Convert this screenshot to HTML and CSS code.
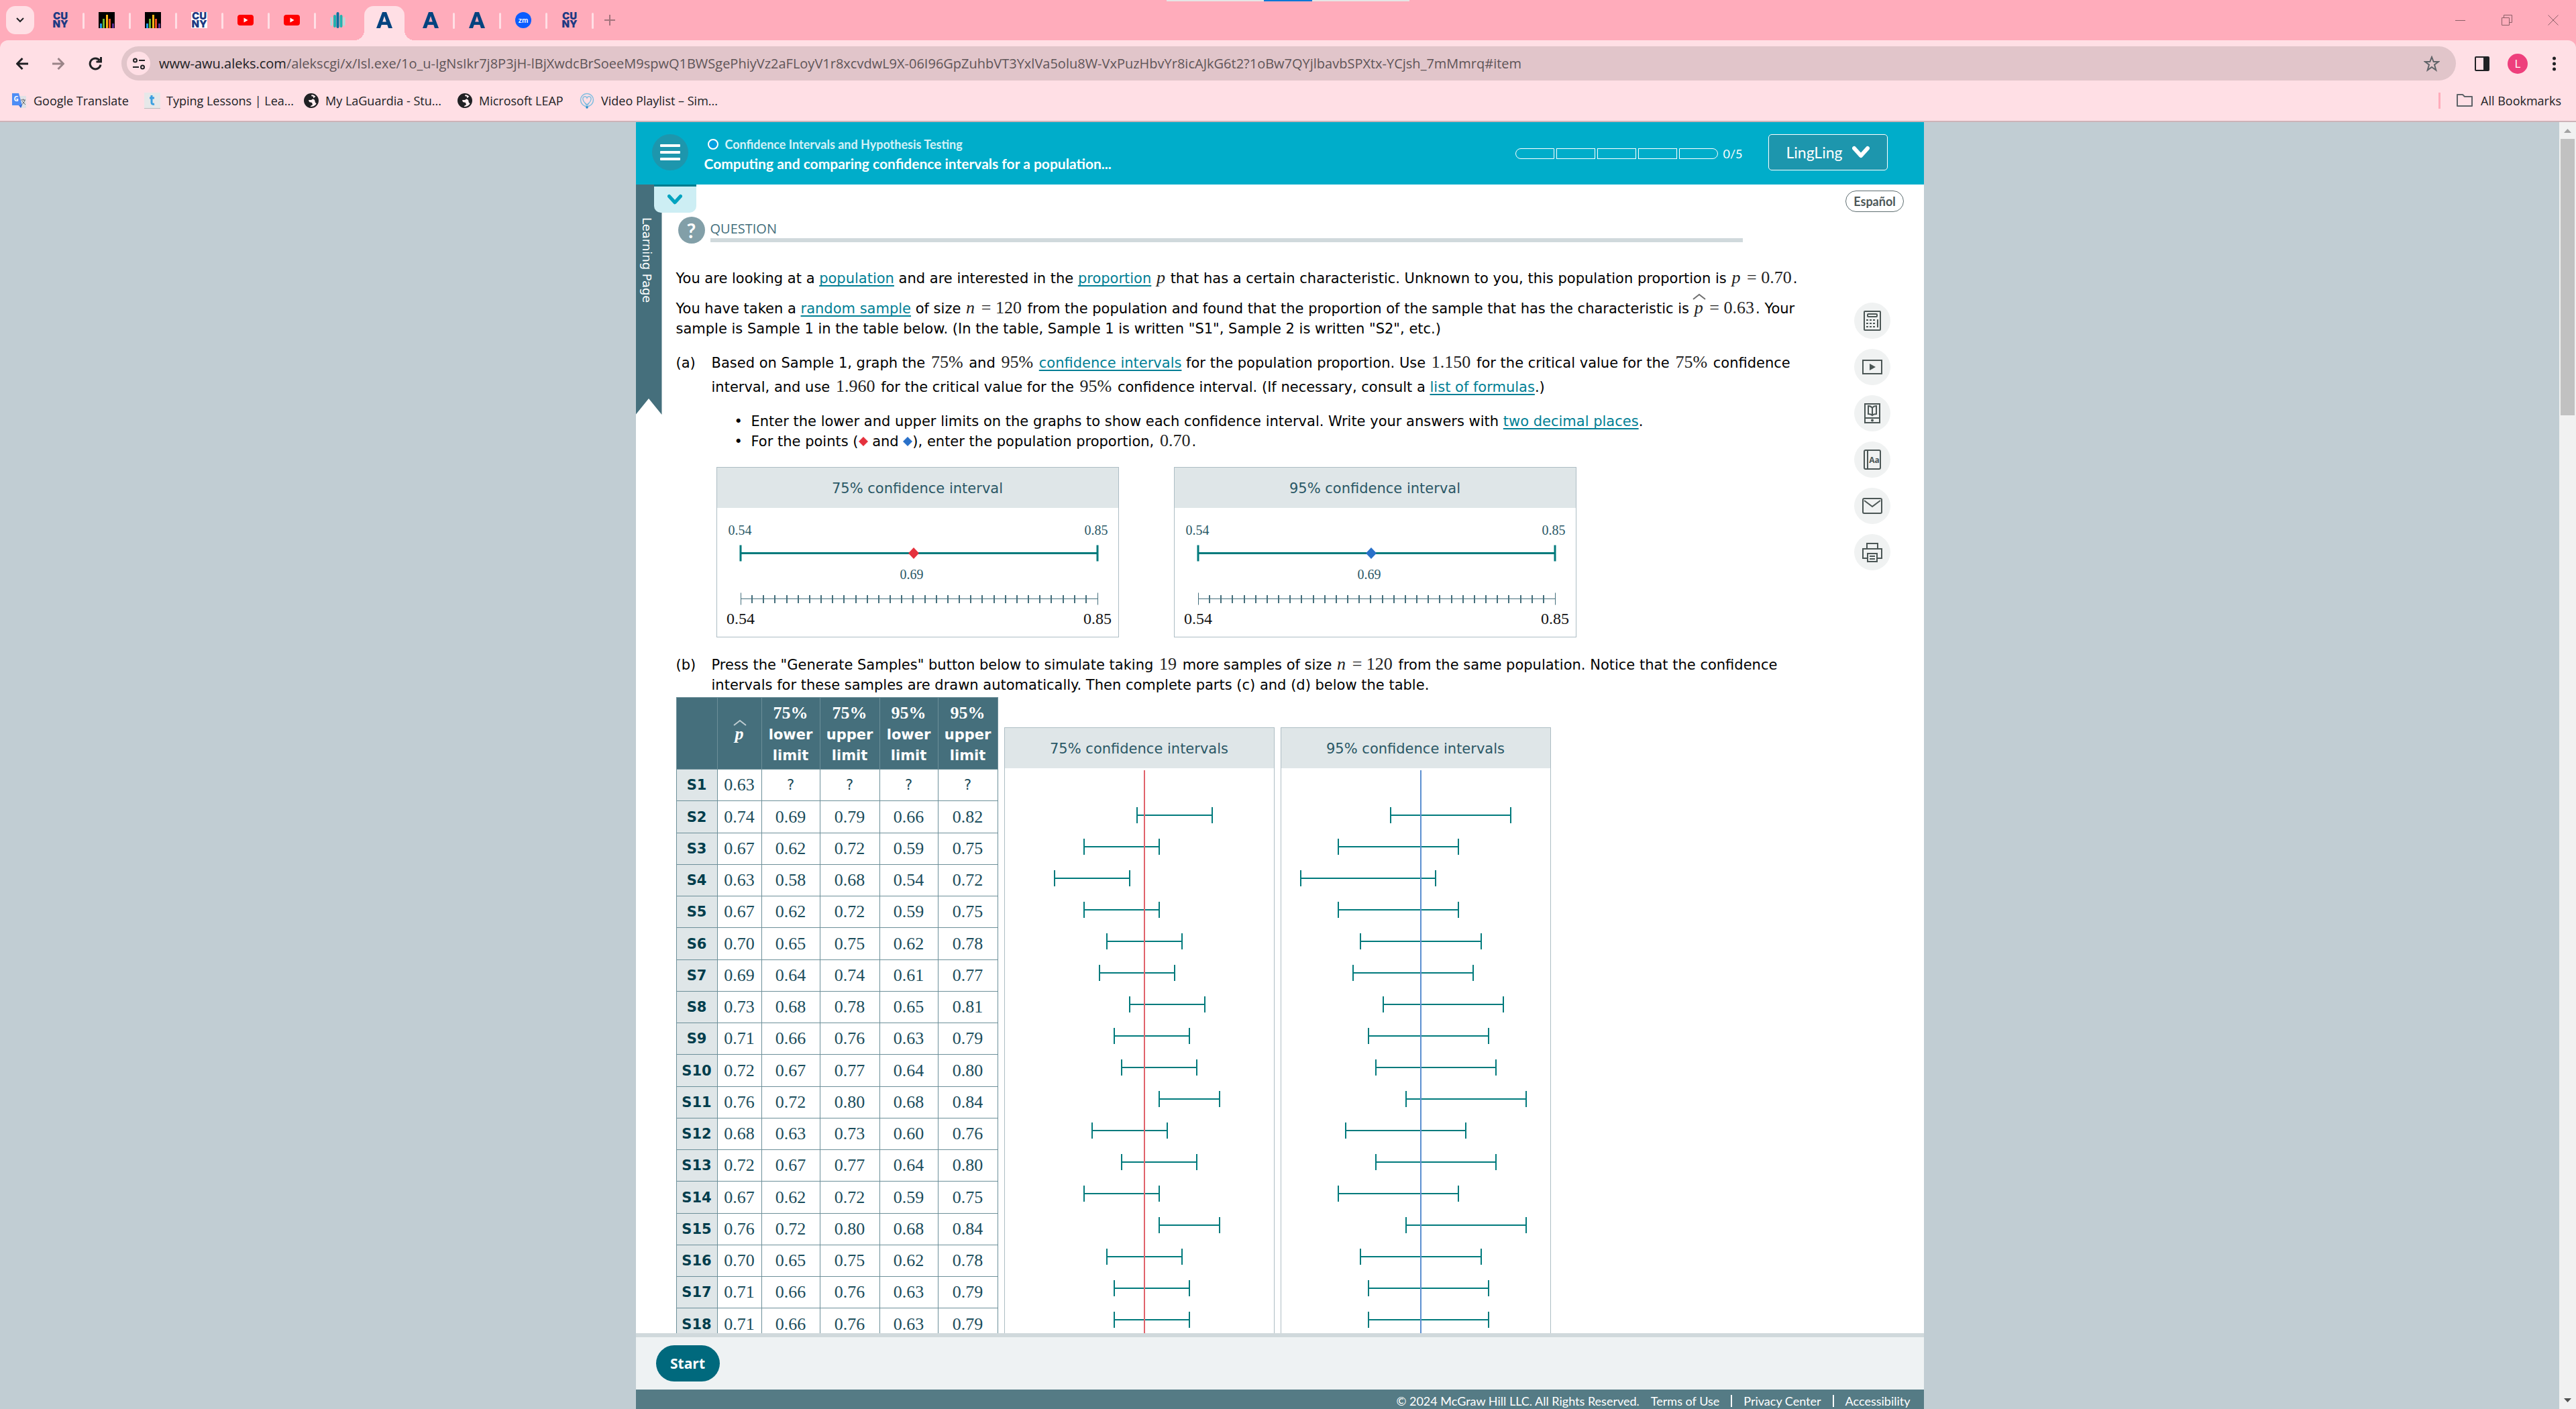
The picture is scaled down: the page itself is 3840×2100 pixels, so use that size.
FILE: index.html
```html
<!DOCTYPE html>
<html lang="en">
<head>
<meta charset="utf-8">
<title>Computing and comparing confidence intervals for a population proportion</title>
<link rel="stylesheet" href="styles.css">
</head>
<body>
<svg class="defs" aria-hidden="true">
  <symbol id="cuny" viewBox="0 0 24 24"><text x="12" y="11" text-anchor="middle" class="cuny-text">CU</text><text x="12" y="23" text-anchor="middle" class="cuny-text">NY</text></symbol>
  <symbol id="bars" viewBox="0 0 24 24"><path fill="#000" d="M0 0h24v24H0z"/><path fill="#1e9be9" d="M2 17h3v7H2z"/><path fill="#6cb52d" d="M6 10h3v14H6z"/><path fill="#fbb615" d="M11 4h3v20h-3z"/><path fill="#f04e23" d="M15 10h3v14h-3z"/><path fill="#5c2d91" d="M20 17h3v7h-3z"/></symbol>
  <symbol id="yt" viewBox="0 0 24 24"><rect y="4" width="24" height="16" rx="4" fill="#f00"/><path fill="#fff" d="M9.500 8.500v7l6-3.500z"/></symbol>
  <symbol id="teal" viewBox="0 0 24 24" stroke-linecap="round"><path stroke="#a9dfdf" stroke-width="3" d="M2 9v10M21 9v10"/><path stroke="#22b3b0" stroke-width="4" d="M7 6v15M16.500 6v15"/><path stroke="#0b6f9f" stroke-width="4" d="M11.500 2v20"/></symbol>
  <symbol id="aleks" viewBox="0 0 24 24"><path fill="#03437f" fill-rule="evenodd" d="M9 0h6l9 24h-6l-1.700-5H7.700L6 24H0zM12 6L9.200 14.500h5.600z"/></symbol>
  <symbol id="globe" viewBox="0 0 24 24"><circle cx="12" cy="12" r="10" fill="#fff0f2" stroke="#202124" stroke-width="2"/><path fill="#202124" d="M2 11C2 5 7 1 13 2l-1 3 3 1v3l-3 2-4 0 1 3 4 1 1 3-3 2-1 3C5 20 2 16 2 11zM19 5c3 3 4 8 2 12l-3-2-1-4-3-2 3-2z"/></symbol>
  <symbol id="hat" viewBox="0 0 20 10"><path d="M1 9l9-7 9 7" fill="none" stroke="currentColor" stroke-width="2"/></symbol>
  <symbol id="chev" viewBox="0 0 26 20"><path d="M3 4l10 11L23 4" fill="none" stroke="currentColor" stroke-width="6" stroke-linecap="round" stroke-linejoin="round"/></symbol>
</svg>

<header class="browser">
  <div class="screen-pill"><span></span></div>
  <div class="tabstrip">
    <button class="tab-search" aria-label="Search tabs"><svg width="14" height="10" viewBox="0 0 14 10"><path d="M2 2l5 5 5-5" fill="none" stroke="#202124" stroke-width="2"/></svg></button>
    <nav class="tabs">
      <span class="tab"><svg><use href="#cuny"/></svg></span>
      <span class="tab"><svg><use href="#bars"/></svg></span>
      <span class="tab"><svg><use href="#bars"/></svg></span>
      <span class="tab"><svg class="white"><use href="#cuny"/></svg></span>
      <span class="tab"><svg><use href="#yt"/></svg></span>
      <span class="tab"><svg><use href="#yt"/></svg></span>
      <span class="tab bare"><svg><use href="#teal"/></svg></span>
      <span class="tab active"><svg><use href="#aleks"/></svg></span>
      <span class="tab"><svg><use href="#aleks"/></svg></span>
      <span class="tab"><svg><use href="#aleks"/></svg></span>
      <span class="tab"><svg viewBox="0 0 24 24"><circle cx="12" cy="12" r="12" fill="#0b5cff"/><text x="12" y="16" text-anchor="middle" class="zm-text">zm</text></svg></span>
      <span class="tab"><svg><use href="#cuny"/></svg></span>
    </nav>
    <button class="new-tab" aria-label="New tab"><svg width="16" height="16" viewBox="0 0 16 16"><path d="M8 0v16M0 8h16" stroke="#a3737c" stroke-width="2"/></svg></button>
    <div class="win-controls">
      <button aria-label="Minimise"><svg width="16" height="16" viewBox="0 0 16 16"><path d="M0 8.500h15"/></svg></button>
      <button aria-label="Restore"><svg width="16" height="16" viewBox="0 0 16 16"><path d="M.5 4.500h11v11H.5zM3.500 4V.5h12v11H12"/></svg></button>
      <button aria-label="Close"><svg width="16" height="16" viewBox="0 0 16 16"><path d="M.5.5l15 15M15.500.5l-15 15"/></svg></button>
    </div>
  </div>
  <div class="chrome-body">
    <div class="toolbar">
      <button aria-label="Back"><svg width="18" height="18" viewBox="0 0 18 18"><path d="M18 9H2M9.500 1L1.500 9l8 8" stroke="#202124"/></svg></button>
      <button aria-label="Forward"><svg width="18" height="18" viewBox="0 0 18 18"><path d="M0 9h16M8.500 1l8 8-8 8" stroke="#9a8488"/></svg></button>
      <button aria-label="Reload"><svg width="20" height="20" viewBox="0 0 20 20"><path d="M18 11.500A8 8 0 1 1 16.500 5M18.500 0v7h-7" stroke="#202124"/></svg></button>
      <div class="omnibox">
        <span class="site-info"><svg width="20" height="18" viewBox="0 0 20 18" fill="none" stroke="#202124" stroke-width="2"><circle cx="4.500" cy="4" r="2.500"/><path d="M10 4h9M1 14h9"/><circle cx="15.500" cy="14" r="2.500"/></svg></span>
        <p class="url"><b>www-awu.aleks.com</b>/alekscgi/x/Isl.exe/1o_u-IgNsIkr7j8P3jH-lBjXwdcBrSoeeM9spwQ1BWSgePhiyVz2aFLoyV1r8xcvdwL9X-06I96GpZuhbVT3YxlVa5olu8W-VxPuzHbvYr8icAJkG6t2?1oBw7QYjlbavbSPXtx-YCjsh_7mMmrq#item</p>
        <svg class="star" width="24" height="24" viewBox="0 0 24 24"><path d="M12 2l2.700 7H22l-6 4.500 2.300 8L12 17l-6.300 4.500 2.300-8L2 9h7.300z" fill="none" stroke="#5f6368" stroke-width="2"/></svg>
      </div>
      <button aria-label="Side panel"><svg width="22" height="22" viewBox="0 0 22 22"><rect x="1" y="1" width="20" height="20" rx="1" fill="none" stroke="#202124"/><path d="M13 1h8v20h-8z" fill="#202124"/></svg></button>
      <span class="avatar">L</span>
      <button class="kebab" aria-label="Menu"><svg width="5" height="22" viewBox="0 0 5 22" fill="#202124"><circle cx="2.500" cy="3" r="2.500"/><circle cx="2.500" cy="11" r="2.500"/><circle cx="2.500" cy="19" r="2.500"/></svg></button>
    </div>
    <div class="bookmarks">
      <span class="bm bm-1"><svg viewBox="0 0 24 24"><path fill="#dfe1e5" d="M10 5h12v18H14z"/><path fill="#3367d6" d="M11 19h5l-2 4z"/><path fill="#4e8df5" d="M1 1h10l5 18H1z"/><text x="7" y="13" text-anchor="middle" class="g-text">G</text><path d="M14 11h7M17.500 9.500V11M20 11c-1 4-3 6-5 7M16 13l5 5" stroke="#5f6368" fill="none"/></svg>Google Translate</span>
      <span class="bm bm-2"><svg viewBox="0 0 24 24"><path fill="#b9bcbd" d="M0 0h24v24H0z"/><path fill="#e6e8e9" d="M0 0h24v23H0z"/><path d="M11 4v11q0 3 4 2M8 8h7" stroke="#3a9fe0" stroke-width="3" fill="none"/></svg>Typing Lessons | Lea...</span>
      <span class="bm bm-3"><svg><use href="#globe"/></svg>My LaGuardia - Stu...</span>
      <span class="bm bm-4"><svg><use href="#globe"/></svg>Microsoft LEAP</span>
      <span class="bm bm-5"><svg viewBox="0 0 24 24" fill="none" stroke="#7fbde0" stroke-width="1.500"><circle cx="12" cy="11" r="9.500"/><path d="M12 18c-4-3-7-6-6-10 1-3 5-3 6 0 1-3 5-3 6 0 1 4-2 7-6 10zM9 16l3 3 3-3"/><circle cx="12" cy="22" r="1" stroke="#1b87c9"/></svg>Video Playlist – Sim...</span>
      <span class="bm-all"><svg viewBox="0 0 24 24"><path d="M1 3h8l3 3h11v14H1z" fill="none" stroke="#5f6368" stroke-width="2" stroke-linejoin="round"/></svg>All Bookmarks</span>
    </div>
  </div>
</header>

<div class="viewport">
  <div class="backdrop">
    <div class="app">
      <header class="app-head">
        <button class="burger" aria-label="Menu"><span></span><span></span><span></span></button>
        <div class="titles">
          <p class="topic"><i></i>Confidence Intervals and Hypothesis Testing</p>
          <h1>Computing and comparing confidence intervals for a population...</h1>
        </div>
        <div class="progress"><i></i><i></i><i></i><i></i><i></i></div>
        <span class="score">0/5</span>
        <button class="user">LingLing<svg width="26" height="20"><use href="#chev"/></svg></button>
      </header>

      <div class="work">
        <div class="rail">
          <button class="drop" aria-label="Show more"><svg width="22" height="17"><use href="#chev"/></svg></button>
          <a class="ribbon" href="#learning">Learning Page</a>
        </div>
        <main>
          <div class="question"><span class="qmark">?</span><h2>QUESTION</h2></div>
          <p>You are looking at a <a href="#population">population</a> and are interested in the <a href="#proportion">proportion</a> <var>p</var> that has a certain characteristic. Unknown to you, this population proportion is <var>p</var> <span class="m">= 0.70</span>.</p>
          <p>You have taken a <a href="#sample">random sample</a> of size <var>n</var> <span class="m">= 120</span> from the population and found that the proportion of the sample that has the characteristic is <var class="phat"><svg><use href="#hat"/></svg>p</var> <span class="m">= 0.63</span>. Your<br>sample is Sample 1 in the table below. (In the table, Sample 1 is written "S1", Sample 2 is written "S2", etc.)</p>
          <div class="part part-a"><span>(a)</span><p>Based on Sample 1, graph the <span class="m">75%</span> and <span class="m">95%</span> <a href="#ci">confidence intervals</a> for the population proportion. Use <span class="m">1.150</span> for the critical value for the <span class="m">75%</span> confidence<br>interval, and use <span class="m">1.960</span> for the critical value for the <span class="m">95%</span> confidence interval. (If necessary, consult a <a href="#formulas">list of formulas</a>.)</p></div>
          <ul>
            <li>Enter the lower and upper limits on the graphs to show each confidence interval. Write your answers with <a href="#places">two decimal places</a>.</li>
            <li>For the points (<svg class="dia red" viewBox="0 0 14 14"><path d="M7 0l7 7-7 7-7-7z"/></svg> and <svg class="dia blue" viewBox="0 0 14 14"><path d="M7 0l7 7-7 7-7-7z"/></svg>), enter the population proportion, <span class="m">0.70</span>.</li>
          </ul>
          <div class="cards">
            <section class="panel card">
              <h3>75% confidence interval</h3>
              <svg class="single red" viewBox="0 0 598 192"></svg>
            </section>
            <section class="panel card">
              <h3>95% confidence interval</h3>
              <svg class="single blue" viewBox="0 0 598 192"></svg>
            </section>
          </div>
          <div class="part part-b"><span>(b)</span><p>Press the "Generate Samples" button below to simulate taking <span class="m">19</span> more samples of size <var>n</var> <span class="m">= 120</span> from the same population. Notice that the confidence<br>intervals for these samples are drawn automatically. Then complete parts (c) and (d) below the table.</p></div>
          <div class="results">
            <table>
              <colgroup><col class="c1"><col class="c2"><col class="c3"><col class="c4"><col class="c3"><col class="c4"></colgroup>
              <thead><tr><th></th><th><var class="phat"><svg><use href="#hat"/></svg>p</var></th><th><span class="m">75%</span><br>lower<br>limit</th><th><span class="m">75%</span><br>upper<br>limit</th><th><span class="m">95%</span><br>lower<br>limit</th><th><span class="m">95%</span><br>upper<br>limit</th></tr></thead>
              <tbody>
                <tr><th>S1</th><td>0.63</td><td class="q">?</td><td class="q">?</td><td class="q">?</td><td class="q">?</td></tr>
                <tr><th>S2</th><td>0.74</td><td>0.69</td><td>0.79</td><td>0.66</td><td>0.82</td></tr>
                <tr><th>S3</th><td>0.67</td><td>0.62</td><td>0.72</td><td>0.59</td><td>0.75</td></tr>
                <tr><th>S4</th><td>0.63</td><td>0.58</td><td>0.68</td><td>0.54</td><td>0.72</td></tr>
                <tr><th>S5</th><td>0.67</td><td>0.62</td><td>0.72</td><td>0.59</td><td>0.75</td></tr>
                <tr><th>S6</th><td>0.70</td><td>0.65</td><td>0.75</td><td>0.62</td><td>0.78</td></tr>
                <tr><th>S7</th><td>0.69</td><td>0.64</td><td>0.74</td><td>0.61</td><td>0.77</td></tr>
                <tr><th>S8</th><td>0.73</td><td>0.68</td><td>0.78</td><td>0.65</td><td>0.81</td></tr>
                <tr><th>S9</th><td>0.71</td><td>0.66</td><td>0.76</td><td>0.63</td><td>0.79</td></tr>
                <tr><th>S10</th><td>0.72</td><td>0.67</td><td>0.77</td><td>0.64</td><td>0.80</td></tr>
                <tr><th>S11</th><td>0.76</td><td>0.72</td><td>0.80</td><td>0.68</td><td>0.84</td></tr>
                <tr><th>S12</th><td>0.68</td><td>0.63</td><td>0.73</td><td>0.60</td><td>0.76</td></tr>
                <tr><th>S13</th><td>0.72</td><td>0.67</td><td>0.77</td><td>0.64</td><td>0.80</td></tr>
                <tr><th>S14</th><td>0.67</td><td>0.62</td><td>0.72</td><td>0.59</td><td>0.75</td></tr>
                <tr><th>S15</th><td>0.76</td><td>0.72</td><td>0.80</td><td>0.68</td><td>0.84</td></tr>
                <tr><th>S16</th><td>0.70</td><td>0.65</td><td>0.75</td><td>0.62</td><td>0.78</td></tr>
                <tr><th>S17</th><td>0.71</td><td>0.66</td><td>0.76</td><td>0.63</td><td>0.79</td></tr>
                <tr><th>S18</th><td>0.71</td><td>0.66</td><td>0.76</td><td>0.63</td><td>0.79</td></tr>
              </tbody>
            </table>
            <section class="panel"><h3>75% confidence intervals</h3><svg class="many red" data-col="2" viewBox="0 0 401 850"></svg></section>
            <section class="panel"><h3>95% confidence intervals</h3><svg class="many blue" data-col="4" viewBox="0 0 401 850"></svg></section>
          </div>
        </main>
        <aside>
          <button class="lang">Español</button>
          <nav class="tools">
            <button aria-label="Calculator"><svg viewBox="0 0 30 30"><rect x="3" y="1" width="24" height="28" rx="1"/><rect x="8" y="5" width="14" height="4" rx="1"/><path stroke-dasharray="3 2" d="M6 14h14M6 19h14M6 24h14"/><path d="M23 13v12"/></svg></button>
            <button aria-label="Video"><svg viewBox="0 0 30 30"><path d="M1 5h28v20H1z"/><path class="solid" d="M11 10l9 5-9 5z"/></svg></button>
            <button aria-label="eBook"><svg viewBox="0 0 30 30"><path d="M4 1h22v28H4zM4 22h22M9 4q4 0 6 3 2-3 6-3v12q-4 0-6 2-2-2-6-2zM15 7v11"/><circle cx="15" cy="25.500" r="1"/></svg></button>
            <button aria-label="Dictionary"><svg viewBox="0 0 30 30"><rect x="3" y="1" width="24" height="28" rx="2"/><path d="M8 1v28"/><text x="18" y="20" text-anchor="middle">Aa</text></svg></button>
            <button aria-label="Message"><svg viewBox="0 0 30 30"><rect x="1" y="4" width="28" height="22" rx="2"/><path d="M3 7l12 9 12-9"/></svg></button>
            <button aria-label="Print"><svg viewBox="0 0 30 30"><path d="M7 10V2h16v8M7 24H1V10h28v14h-6"/><rect x="8" y="17" width="14" height="12"/><path d="M11 21h8M11 25h8"/></svg></button>
          </nav>
        </aside>
      </div>

      <div class="actions"><button class="start">Start</button></div>
      <footer><span>© 2024 McGraw Hill LLC. All Rights Reserved.</span><a href="#terms">Terms of Use</a><i></i><a href="#privacy">Privacy Center</a><i></i><a href="#access">Accessibility</a></footer>
    </div>
  </div>
  <div class="scrollbar"><svg width="11" height="6" viewBox="0 0 11 6"><path fill="#a3a3a3" d="M0 6l5.500-6L11 6z"/></svg><span></span><svg width="11" height="6" viewBox="0 0 11 6"><path fill="#505050" d="M0 0l5.500 6L11 0z"/></svg></div>
</div>
<script src="script.js"></script>
</body>
</html>
```
FILE: styles.css
```css
* { box-sizing: border-box; }
body { margin: 0; height: 100vh; display: flex; flex-direction: column; overflow: hidden; font-family: "DejaVu Sans", sans-serif; font-size: 21px; color: #000; background: #c1cdd3; }
h1, h2, h3, p, ul { margin: 0; padding: 0; font-weight: normal; }
button { font: inherit; color: inherit; border: 0; padding: 0; background: none; display: flex; align-items: center; justify-content: center; }
svg { display: block; flex: none; }
.defs { display: none; }

/* browser window */
.browser { font-family: "Open Sans", sans-serif; background: #ffacbb; position: relative; }
.screen-pill { position: absolute; top: 0; left: 0; right: 0; margin: 0 auto; width: 362px; height: 2px; background: #e5e5e5; display: flex; justify-content: center; }
.screen-pill span { width: 72px; background: #0078d7; }
.tabstrip { height: 60px; display: flex; align-items: center; padding-left: 9px; }
.tab-search { width: 42px; height: 42px; border-radius: 14px; background: #ffdfe5; margin-right: 6px; }
.tabs { display: flex; align-self: stretch; }
.tab { width: 69px; display: flex; align-items: center; justify-content: center; position: relative; padding-right: 3px; }
.tab::after { content: ""; position: absolute; right: 0; top: 19px; width: 3px; height: 24px; border-radius: 2px; background: #ffdfe5; }
.tab svg { width: 24px; height: 24px; position: relative; }
.tab svg.white { background: #fff; }
.tab.bare::after { display: none; }
.tab.active::before { content: ""; position: absolute; left: 3px; right: 6px; top: 9px; bottom: 0; border-radius: 14px 14px 0 0; background: #ffdfe5; }
.tab.active::after { top: auto; bottom: 0; left: -12px; right: -9px; width: auto; height: 15px; border-radius: 0; background: radial-gradient(circle at 0 0, transparent 15px, #ffdfe5 15px) left / 15px 15px no-repeat, radial-gradient(circle at 100% 0, transparent 15px, #ffdfe5 15px) right / 15px 15px no-repeat; }
.cuny-text { font: 900 15px Inter, sans-serif; fill: #1d3a83; }
.zm-text { font: 700 11px Lato, sans-serif; fill: #fff; }
.g-text { font: 700 10px "Open Sans", sans-serif; fill: #fff; }
.new-tab { margin-left: 16px; }
.win-controls { margin-left: auto; display: flex; gap: 53px; padding-right: 26px; }
.win-controls path { fill: none; stroke: #8c5f67; }
.chrome-body { background: #ffdfe5; border-radius: 12px 12px 0 0; border-bottom: 2px solid #cdb3b8; height: 122px; }
.toolbar { display: flex; align-items: center; padding: 9px 30px 0 24px; }
.toolbar button path, .toolbar button rect { stroke-width: 2; }
.toolbar button > svg > path:not([fill]) { fill: none; stroke-width: 3; }
.toolbar > button + button { margin-left: 36px; }
.omnibox { margin: 0 28px 0 29px; flex: 1; min-width: 0; height: 51px; border-radius: 26px; background: #e1c5ca; display: flex; align-items: center; padding: 0 24px 0 8px; }
.site-info { width: 35px; height: 35px; border-radius: 50%; background: #ffdfe5; display: flex; align-items: center; justify-content: center; flex: none; }
.url { margin-left: 13px; font-size: 20px; color: #5f5558; flex: 1; white-space: nowrap; overflow: hidden; }
.url b { font-weight: 400; color: #202124; }
.avatar { width: 30px; height: 30px; border-radius: 50%; background: #ee3f7c; color: #fff; font-size: 17px; line-height: 30px; text-align: center; margin-left: 27px; }
.toolbar .kebab { margin-left: 37px; }
.bookmarks { height: 60px; display: flex; align-items: center; padding: 0 22px 0 17px; font-size: 18px; color: #202124; white-space: nowrap; }
.bookmarks svg { width: 24px; height: 24px; }
.bm, .bm-all { display: flex; align-items: center; gap: 9px; }
.bm-1 { width: 198px; } .bm-2 { width: 237px; } .bm-3 { width: 229px; } .bm-4 { width: 182px; }
.bm-all { margin-left: auto; border-left: 3px solid #ffacbb; height: 24px; padding-left: 24px; gap: 12px; }

/* page */
.viewport { flex: 1; min-height: 0; display: flex; }
.backdrop { flex: 1; min-width: 0; display: flex; justify-content: center; }
.app { width: 100%; max-width: 1920px; display: flex; flex-direction: column; background: #fff; }
.scrollbar { width: 25px; background: #f1f1f1; display: flex; flex-direction: column; align-items: center; padding: 10px 0; }
.scrollbar span { width: 21px; height: 412px; background: #c1c1c1; margin: 9px 0 auto; }

.app-head { height: 93px; flex: none; background: #00adca; color: #fff; display: flex; align-items: center; padding: 0 54px 3px 24px; font-family: Lato, sans-serif; }
.burger { width: 54px; height: 54px; border-radius: 50%; background: #1d96ad; flex-direction: column; gap: 6px; margin-right: 24px; }
.burger span { width: 30px; height: 4px; background: #fff; border-radius: 1px; }
.titles { padding-top: 7px; }
.topic { font-size: 18px; line-height: 26px; font-weight: 700; color: #d6f2f7; display: flex; align-items: center; gap: 10px; padding-left: 5px; }
.topic i { width: 16px; height: 16px; border-radius: 50%; border: 2px solid #fff; background: #009fe0; }
h1 { font-size: 21px; line-height: 32px; font-weight: 700; }
.progress { margin-left: auto; display: flex; gap: 3px; padding-top: 3px; }
.progress i { width: 58px; height: 16px; border: 1px solid #fff; }
.progress i:first-child { border-radius: 8px 0 0 8px; }
.progress i:last-child { border-radius: 0 8px 8px 0; }
.score { font-size: 18px; margin: 0 38px 0 7px; padding-top: 3px; }
.user { width: 178px; height: 54px; border: 1px solid #fff; border-radius: 5px; background: #1d96ad; font-size: 23px; gap: 14px; }

.work { flex: 1; min-height: 0; overflow: hidden; display: flex; align-items: flex-start; }
.rail { width: 39px; flex: none; position: relative; }
.ribbon { display: flex; align-items: center; writing-mode: vertical-rl; width: 39px; height: 343px; padding: 49px 6px 0 0; background: #456f7c; color: #fff; text-decoration: none; font: 18px/1 "DejaVu Sans", sans-serif; clip-path: polygon(0 0, 100% 0, 100% 100%, 50% 319px, 0 100%); }
.drop { position: absolute; z-index: 1; left: 27px; top: 0; width: 63px; height: 42px; border-radius: 0 0 10px 10px; border-top: 3px solid #007c8e; background: #cdeef4; color: #00a3bf; }
main { flex: 1; min-width: 0; padding: 48px 0 0 21px; }
.question { display: flex; gap: 8px; margin: 0 124px 37px 3px; }
.qmark { width: 40px; height: 40px; border-radius: 50%; background: #829fa8; color: #fff; font: 700 30px/40px Lato, sans-serif; text-align: center; }
h2 { flex: 1; height: 38px; font: 20px/36px "Open Sans", sans-serif; color: #456f7c; border-bottom: 6px solid #d0d9dc; }
main p, li { line-height: 30px; white-space: nowrap; }
main > p + p { margin-top: 15px; }
main a { color: #007f95; text-decoration: underline; text-decoration-thickness: 2px; text-underline-offset: 3px; text-decoration-skip-ink: none; }
.m, var { font-family: "Liberation Serif", serif; font-size: 26px; line-height: 20px; color: #222; }
.m { margin: 0 2px; }
var { margin: 0 1px; }
.phat { position: relative; }
.phat svg { position: absolute; left: -3px; top: -7px; width: 20px; height: 10px; opacity: .65; }
.part { display: flex; }
.part > span { width: 53px; flex: none; }
.part-a { margin-top: 18px; line-height: 36px; }
.part-a p { line-height: 36px; }
.part-b { margin: 26px 0 3px; line-height: 30px; }
ul { margin: 18px 0 23px 112px; list-style: none; }
li::before { content: "•"; display: inline-block; width: 25px; margin-left: -25px; }
.dia { display: inline-block; width: 14px; height: 14px; }
.red { --point: #e5323e; --line: #e0636c; }
.blue { --point: #2a71c9; --line: #5b8fd0; }
.dia path, .point { fill: var(--point); }
.cards { display: flex; gap: 82px; margin-left: 60px; }
.panel { border: 1px solid #adbdc4; width: 403px; flex: none; }
.card { width: 600px; height: 254px; }
h3 { height: 60px; background: #dfe6e8; color: #2b5866; font-size: 21px; line-height: 62px; text-align: center; }
.single text { font: 20px "Liberation Serif", serif; fill: #2b5866; text-anchor: middle; }
.single .scale { font-size: 24px; fill: #111; }
.interval { fill: none; stroke: #007a7c; stroke-width: 2; }
.single .interval { stroke-width: 3; }
.axis { fill: none; stroke: #456f7c; stroke-width: 1; }
.ticks { fill: none; stroke: #456f7c; stroke-width: 2; }
.truth { stroke: var(--line); stroke-width: 2; }

.results { display: flex; gap: 9px; align-items: flex-start; }
.results .panel { margin-top: 45px; }
table { border-collapse: collapse; table-layout: fixed; width: 480px; flex: none; }
.c1 { width: 61px; } .c2 { width: 66px; } .c3 { width: 87px; } .c4 { width: 89px; }
th, td { border: 1px solid #6c8f99; padding: 0; text-align: center; height: 47px; }
tbody tr:nth-child(4n + 2) > * { height: 48px; }
tbody th { background: #dfe6e8; color: #003d4c; font-size: 21px; }
td { font-family: "Liberation Serif", serif; font-size: 26px; color: #1b4d5b; line-height: 30px; }
td.q { font: 21px "DejaVu Sans", sans-serif; }
thead th { height: 107px; padding-top: 4px; background: #456f7c; color: #fff; font-size: 21px; line-height: 31px; }
thead .m, thead var { line-height: 30px; color: #fff; }

aside { width: 146px; flex: none; padding-top: 9px; display: flex; flex-direction: column; align-items: center; gap: 135px; }
.lang { width: 87px; height: 32px; border: 1px solid #5f6f72; border-radius: 16px; font: 700 18px Lato, sans-serif; color: #4c5757; }
.tools { display: flex; flex-direction: column; gap: 15px; margin-right: 8px; }
.tools button { width: 54px; height: 54px; border-radius: 50%; background: #f0f2f2; }
.tools svg { width: 30px; height: 30px; fill: none; stroke: #4b5655; stroke-width: 2; }
.tools .solid, .tools text { fill: #4b5655; stroke: none; }
.tools text { font: 700 12px "Open Sans", sans-serif; }

.actions { height: 84px; flex: none; border-top: 6px solid #d0d9dc; background: #eef2f3; padding: 12px 30px; }
.start { width: 95px; height: 54px; border-radius: 27px; background: #00697d; color: #fff; font: 700 21px "Open Sans", sans-serif; }
footer { height: 29px; flex: none; background: #557b85; color: #fff; display: flex; align-items: center; justify-content: flex-end; padding: 5px 15px 0 0; font: 18px/24px Lato, sans-serif; }
footer a { color: #fff; text-decoration: none; border-bottom: 1px dotted #fff; margin-left: 12px; padding: 0 5px; }
footer i { width: 2px; height: 18px; background: #fff; margin-left: 12px; }
```
FILE: script.js
```js
const NS = "http://www.w3.org/2000/svg";

function add(svg, name, attrs, text) {
  const el = document.createElementNS(NS, name);
  for (const key in attrs) el.setAttribute(key, attrs[key]);
  if (text) el.textContent = text;
  svg.appendChild(el);
}

function bracket(left, right, y, half) {
  return `M${left} ${y}H${right}M${left} ${y - half}v${2 * half}M${right} ${y - half}v${2 * half}`;
}

document.querySelectorAll(".single").forEach((svg) => {
  const left = 35, right = 567, steps = 31;
  add(svg, "path", { class: "interval", d: bracket(left, right, 67.5, 12) });
  add(svg, "path", { class: "point", d: "M293 59l8 8.5-8 8.5-8-8.500z" });
  add(svg, "text", { x: left - 1, y: 40 }, "0.54");
  add(svg, "text", { x: right - 2, y: 40 }, "0.85");
  add(svg, "text", { x: 290, y: 106 }, "0.69");
  add(svg, "path", { class: "axis", d: bracket(left + 0.5, right + 0.5, 135.5, 9) });
  let d = "";
  for (let i = 1; i < steps; i++) {
    d += `M${Math.round(left + (i * (right - left)) / steps)} 130v12`;
  }
  add(svg, "path", { class: "ticks", d });
  add(svg, "text", { class: "scale", x: left, y: 173 }, "0.54");
  add(svg, "text", { class: "scale", x: right, y: 173 }, "0.85");
});

document.querySelectorAll(".many").forEach((svg) => {
  const col = Number(svg.dataset.col);
  const place = (v) => Math.round(208 + (v - 0.7) * 1120);
  document.querySelectorAll("tbody tr").forEach((row, i) => {
    const low = parseFloat(row.cells[col].textContent);
    const high = parseFloat(row.cells[col + 1].textContent);
    if (isNaN(low)) return;
    add(svg, "path", { class: "interval", d: bracket(place(low), place(high), 23 + 47 * i, 12) });
  });
  add(svg, "path", { class: "truth", d: "M208 3V850" });
});
```
